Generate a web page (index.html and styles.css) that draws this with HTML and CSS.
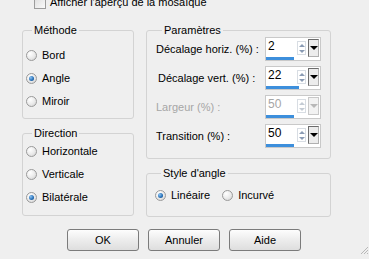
FILE: index.html
```html
<!DOCTYPE html>
<html lang="fr">
<head>
<meta charset="utf-8">
<title>Mosaïque</title>
<link rel="stylesheet" href="styles.css">
</head>
<body>
<div class="dialog">
  <div class="top">
    <span class="check"></span>
    <span class="top-label">Afficher l'aperçu de la mosaïque</span>
  </div>
  <div class="main">
    <div class="col left">
      <fieldset class="group methode">
        <legend>Méthode</legend>
        <div class="opt"><span class="radio"></span>Bord</div>
        <div class="opt"><span class="radio on"></span>Angle</div>
        <div class="opt"><span class="radio"></span>Miroir</div>
      </fieldset>
      <fieldset class="group direction">
        <legend>Direction</legend>
        <div class="opt"><span class="radio"></span>Horizontale</div>
        <div class="opt"><span class="radio"></span>Verticale</div>
        <div class="opt"><span class="radio on"></span>Bilatérale</div>
      </fieldset>
    </div>
    <div class="col right">
      <fieldset class="group params">
        <legend>Paramètres</legend>
        <div class="row">
          <span class="lbl">Décalage horiz. (%) :</span>
          <div class="spin">
            <div class="spin-top"><span class="val">2</span><span class="arrows"><i class="up"></i><i class="dn"></i></span><span class="drop"><i></i></span></div>
            <div class="bar" style="width:28px"></div>
          </div>
        </div>
        <div class="row">
          <span class="lbl indent">Décalage vert. (%) :</span>
          <div class="spin">
            <div class="spin-top"><span class="val">22</span><span class="arrows"><i class="up"></i><i class="dn"></i></span><span class="drop"><i></i></span></div>
            <div class="bar" style="width:33px"></div>
          </div>
        </div>
        <div class="row disabled">
          <span class="lbl">Largeur (%) :</span>
          <div class="spin">
            <div class="spin-top"><span class="val">50</span><span class="arrows"><i class="up"></i><i class="dn"></i></span><span class="drop"><i></i></span></div>
            <div class="bar" style="width:28px"></div>
          </div>
        </div>
        <div class="row">
          <span class="lbl">Transition (%) :</span>
          <div class="spin">
            <div class="spin-top"><span class="val">50</span><span class="arrows"><i class="up"></i><i class="dn"></i></span><span class="drop"><i></i></span></div>
            <div class="bar" style="width:28px"></div>
          </div>
        </div>
      </fieldset>
      <fieldset class="group style">
        <legend>Style d'angle</legend>
        <div class="hopts">
          <div class="opt"><span class="radio on"></span>Linéaire</div>
          <div class="opt"><span class="radio"></span>Incurvé</div>
        </div>
      </fieldset>
    </div>
  </div>
  <div class="buttons">
    <button class="btn">OK</button>
    <button class="btn">Annuler</button>
    <button class="btn">Aide</button>
  </div>
  <svg class="grip" width="9" height="9" viewBox="0 0 9 9">
    <path d="M8 1 L1 8 M8 4 L4 8 M8 7 L7 8" stroke="#b8b8b8" stroke-width="1"/>
  </svg>
</div>
</body>
</html>
```

FILE: styles.css
```css
* { box-sizing: border-box; }
html, body {
  margin: 0;
  padding: 0;
  width: 369px;
  height: 259px;
  overflow: hidden;
  background: #efefef;
}
.dialog {
  position: relative;
  width: 369px;
  height: 259px;
  font-family: "Liberation Sans", Arial, sans-serif;
  font-size: 11px;
  line-height: 13px;
  color: #000;
}
.top {
  display: flex;
  align-items: center;
  gap: 4px;
  height: 13px;
  margin-top: -4px;
  padding-left: 34px;
}
.check {
  width: 12px;
  height: 13px;
  border: 1px solid #9c9c9c;
  background: linear-gradient(135deg, #dcdcdc, #fafafa);
}
.main {
  display: flex;
  gap: 12px;
  padding-left: 22px;
  margin-top: 15px;
}
.col {
  display: flex;
  flex-direction: column;
  gap: 8px;
}
.left { width: 112px; }
.right { width: 185px; }
.group {
  margin: 0;
  border: 1px solid #d3d3d3;
  border-radius: 3px;
  padding: 0;
  min-width: 0;
}
.group legend {
  padding: 0 2px;
  margin-left: 6px;
  line-height: 13px;
}
.methode { height: 95px; padding: 7px 0 0 3px; }
.direction { height: 89px; padding: 0 0 0 3px; }
.methode .opt, .direction .opt { height: 23px; }
.opt {
  display: flex;
  align-items: center;
  gap: 5px;
}
.radio {
  position: relative;
  width: 11px;
  height: 11px;
  border-radius: 50%;
  border: 1px solid #9a9a9a;
  background: radial-gradient(circle at 35% 30%, #ffffff 0%, #ececec 50%, #cfcfcf 100%);
  flex: none;
}
.radio.on::after {
  content: "";
  position: absolute;
  left: 2px;
  top: 2px;
  width: 5px;
  height: 5px;
  border-radius: 50%;
  background: radial-gradient(circle at 35% 35%, #8ec4f2 0%, #2a74bc 55%, #0f3f73 100%);
}
.params { height: 135px; padding: 0 0 0 9px; }
.row {
  display: flex;
  align-items: flex-start;
  justify-content: space-between;
  height: 29px;
  padding-right: 9px;
}
.lbl { padding-top: 6px; }
.lbl.indent { padding-left: 2px; }
.disabled { color: #a6a6a6; }
.spin {
  width: 56px;
  height: 24px;
  background: #fff;
  border: 1px solid #c9c9c9;
  display: flex;
  flex-direction: column;
  justify-content: space-between;
}
.spin-top {
  display: flex;
  align-items: flex-start;
  padding-top: 1px;
}
.val {
  flex: 1;
  padding-left: 2px;
  font-size: 12px;
  line-height: 14px;
}
.arrows {
  display: flex;
  flex-direction: column;
  width: 9px;
  margin-top: 2px;
  margin-right: 2px;
  border: 1px solid #d8dde3;
}
.arrows i {
  display: flex;
  justify-content: center;
  align-items: center;
  height: 6px;
}
.arrows i::before {
  content: "";
  border-left: 3px solid transparent;
  border-right: 3px solid transparent;
}
.arrows .up::before { border-bottom: 3px solid #8a9bb4; }
.arrows .dn::before { border-top: 3px solid #8a9bb4; }
.drop {
  display: flex;
  justify-content: center;
  align-items: center;
  width: 11px;
  height: 18px;
  margin-right: 1px;
  border: 1px solid #6c6c6c;
  border-right-color: #b0b0b0;
  border-bottom-color: #b0b0b0;
  background: #ececec;
}
.drop i {
  border-left: 4px solid transparent;
  border-right: 4px solid transparent;
  border-top: 4px solid #000;
}
.disabled .arrows .up::before { border-bottom-color: #c4cbd4; }
.disabled .arrows .dn::before { border-top-color: #c4cbd4; }
.disabled .drop { border-color: #c8c8c8; background: #f2f2f2; }
.disabled .drop i { border-top-color: #b8b8b8; }
.bar {
  height: 3px;
  background: #3d8fdc;
}
.style { height: 50px; padding: 9px 0 0 8px; }
.hopts { display: flex; gap: 12px; }
.buttons {
  display: flex;
  gap: 9px;
  padding-left: 67px;
  margin-top: 12px;
}
.btn {
  width: 72px;
  height: 22px;
  padding: 0;
  font-family: "Liberation Sans", Arial, sans-serif;
  font-size: 11px;
  color: #000;
  border: 1px solid #7b7b7b;
  border-radius: 3px;
  background: linear-gradient(#fdfdfd, #eeeeee 45%, #dedede);
}
.grip {
  position: absolute;
  right: 0;
  bottom: 0;
}
```
